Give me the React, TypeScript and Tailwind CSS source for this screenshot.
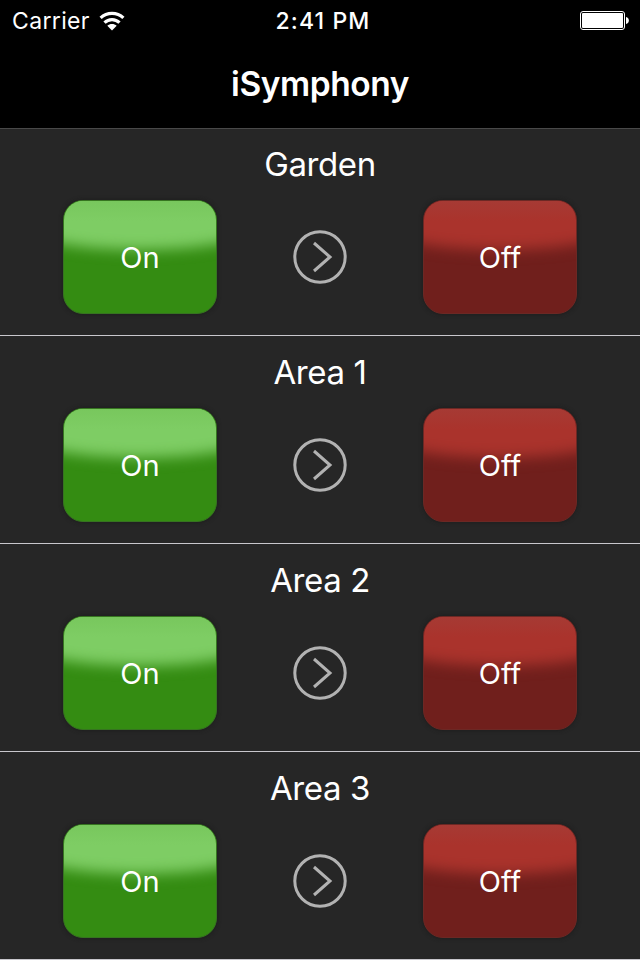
const AREAS = ["Garden", "Area 1", "Area 2", "Area 3"];

export default function App() {
  return (
    <div className="flex h-[960px] w-[640px] flex-col overflow-hidden bg-[#262626] font-['Inter',sans-serif] text-white">
      <header className="h-32 shrink-0 bg-black">
        <StatusBar />
        <h1 className="h-22 text-center text-[33.5px] leading-[89px] font-semibold tracking-[-0.45px]">iSymphony</h1>
      </header>
      <main>
        {AREAS.map((name, i) => (
          <AreaRow key={name} name={name} first={i === 0} />
        ))}
      </main>
    </div>
  );
}

function StatusBar() {
  return (
    <div className="grid h-10 grid-cols-3 items-center pr-[11px] pl-3 text-[23px] leading-10">
      <div className="flex items-center gap-[9px]">
        <span className="pt-px tracking-[0.35px]">Carrier</span>
        <svg width="26" height="20" viewBox="0 0 26 20" fill="none" stroke="white" strokeWidth="3.2">
          <path d="M1.600 6.900c6.400-6.100 16.400-6.100 22.800 0" />
          <path d="M5.500 11.600c4.200-4.100 10.800-4.100 15 0" />
          <path d="M13 19.500l-4.700-4.700c2.500-2.500 6.900-2.500 9.400 0z" fill="white" stroke="none" />
        </svg>
      </div>
      <span className="pt-px pl-[5px] text-center font-medium tracking-[1.1px] whitespace-nowrap">2:41 PM</span>
      <svg className="mt-px justify-self-end" width="49" height="20" viewBox="0 0 49 20">
        <rect x="0.5" y="0.5" width="44" height="18" rx="2.5" fill="none" stroke="white" />
        <rect x="2" y="2" width="41" height="15" rx="1" fill="white" />
        <path d="M46 6c3.800.5 3.800 6.500 0 7z" fill="white" />
      </svg>
    </div>
  );
}

function AreaRow({ name, first }: { name: string; first: boolean }) {
  return (
    <section
      className={`flex h-52 flex-col border-b border-b-[#c8c7cc] ${first ? "border-t border-t-[#494949] pt-[11px]" : "pt-3"}`}
    >
      <h2 className="h-[50px] text-center text-[33px] leading-[49px] tracking-[-0.4px]">{name}</h2>
      <div className="mt-[10px] flex items-center justify-between px-[63px]">
        <PowerButton on />
        <svg width="54" height="54" viewBox="0 0 54 54" fill="none" stroke="#b2b2b2" strokeWidth="3">
          <circle cx="27" cy="27" r="25.2" />
          <path d="M21 13l16 14-16 14" />
        </svg>
        <PowerButton />
      </div>
    </section>
  );
}

function PowerButton({ on = false }: { on?: boolean }) {
  return (
    <button
      className={`relative h-[114px] w-[154px] overflow-hidden rounded-[20px] border pt-0.5 text-[29px] shadow-[0_0_4px_#1b1b1b] ${
        on ? "border-[#367420] bg-[#348c12]" : "border-[#6c2824] bg-[#701f1c]"
      }`}
    >
      {/* gloss */}
      <span
        className={`absolute -top-[70px] -left-[100px] h-[119px] w-[352px] rounded-[50%] blur-[7px] ${
          on ? "bg-[#7ecd64]" : "bg-[#aa332c]"
        }`}
      />
      {/* slightly muted band along the top edge */}
      <span
        className={`absolute inset-x-0 top-0 h-5 bg-linear-to-b to-transparent ${on ? "from-[#78c75d]" : "from-[#a63a34]"}`}
      />
      <span className="relative">{on ? "On" : "Off"}</span>
    </button>
  );
}
